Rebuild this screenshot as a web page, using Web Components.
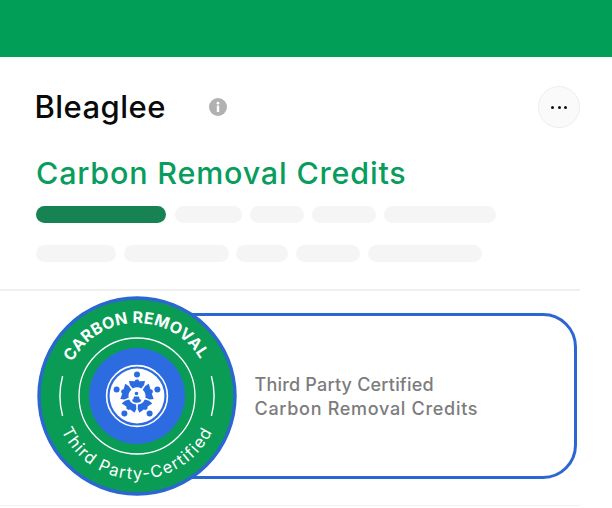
<!DOCTYPE html>
<html>
<head>
<meta charset="utf-8">
<title>Bleaglee</title>
<style>
  html, body { margin: 0; padding: 0; background: #fff; }
  body { font-family: "Inter", "Liberation Sans", sans-serif; overflow: hidden; }
</style>
</head>
<body>
<credit-page>
  <info-head name="Bleaglee"></info-head>
  <h-title slot="title">Carbon Removal Credits</h-title>
  <pill-row slot="rows" widths="130:dark,67::1,54,64,112"></pill-row>
  <pill-row slot="rows" widths="80,105,52::-1,64,114"></pill-row>
  <cert-card slot="card">
    <carbon-badge slot="badge"></carbon-badge>
    <span class="a" slot="one">Third Party Certified</span>
    <span class="b" slot="two">Carbon Removal Credits</span>
  </cert-card>
</credit-page>

<script>
class CreditPage extends HTMLElement {
  constructor() {
    super();
    this.attachShadow({ mode: "open" }).innerHTML = `
      <style>
        :host { display: block; width: 612px; height: 508px; background: #fff; }
        .bar { height: 57px; background: #019e58; }
        .top { width: 580px; height: 234px; box-sizing: border-box; padding: 29px 0 0 36px; border-bottom: 2px solid #f0f0f0; }
        .rows { display: flex; flex-direction: column; gap: 22.5px; margin-top: 13px; }
        .low { width: 580px; height: 215px; box-sizing: border-box; padding: 5px 0 0 36.5px; border-bottom: 1px solid #f2f2f2; }
      </style>
      <div class="bar"></div>
      <div class="top">
        <slot></slot>
        <slot name="title"></slot>
        <div class="rows"><slot name="rows"></slot></div>
      </div>
      <div class="low"><slot name="card"></slot></div>`;
  }
}
customElements.define("credit-page", CreditPage);

class InfoHead extends HTMLElement {
  constructor() {
    super();
    this.attachShadow({ mode: "open" }).innerHTML = `
      <style>
        :host { display: flex; align-items: center; height: 42px; }
        .name { font: 500 31px/42px "Inter", sans-serif; color: #0a0a0a; width: 174px; margin-left: -1.5px; letter-spacing: .45px; }
        svg { display: block; }
        .more { margin-left: auto; width: 42px; height: 42px; box-sizing: border-box; border-radius: 50%; background: #fafafa; border: 1px solid #eeeeee; display: flex; align-items: center; justify-content: center; gap: 3.6px; }
        .more i { width: 3px; height: 3px; border-radius: 50%; background: #111; }
      </style>
      <span class="name"></span>
      <svg width="18" height="18" viewBox="0 0 18 18">
        <circle cx="9" cy="9" r="9" fill="#b1b1b1"/>
        <circle cx="9" cy="5.2" r="1.4" fill="#fff"/>
        <rect x="7.8" y="7.6" width="2.4" height="6.4" rx=".5" fill="#fff"/>
      </svg>
      <div class="more"><i></i><i></i><i></i></div>`;
    this.shadowRoot.querySelector(".name").textContent = this.getAttribute("name");
  }
}
customElements.define("info-head", InfoHead);

class HTitle extends HTMLElement {
  constructor() {
    super();
    this.attachShadow({ mode: "open" }).innerHTML = `
      <style>
        :host { display: block; margin-top: 25px; font: 500 30.5px/40px "Inter", sans-serif; color: #089d5c; letter-spacing: .8px; }
      </style>
      <slot></slot>`;
  }
}
customElements.define("h-title", HTitle);

class PillRow extends HTMLElement {
  constructor() {
    super();
    this.attachShadow({ mode: "open" }).innerHTML = `
      <style>
        :host { display: flex; gap: 8px; }
        b { display: block; height: 16.5px; border-radius: 9px; background: #f5f5f5; }
        b.dark { background: #178353; }
      </style>`;
    for (const w of this.getAttribute("widths").split(",")) {
      const pill = document.createElement("b");
      const [px, kind, nudge] = w.split(":");
      pill.style.width = px + "px";
      if (kind) pill.className = kind;
      if (nudge) pill.style.marginLeft = nudge + "px";
      this.shadowRoot.appendChild(pill);
    }
  }
}
customElements.define("pill-row", PillRow);

class CertCard extends HTMLElement {
  constructor() {
    super();
    this.attachShadow({ mode: "open" }).innerHTML = `
      <style>
        :host { display: flex; align-items: center; width: 540px; height: 200px; }
        .badge { position: relative; z-index: 1; flex: none; display: block; width: 200px; height: 200px; }
        .box {
          flex: none; width: 427px; height: 166px; box-sizing: border-box; margin-left: -86.5px;
          display: flex; flex-direction: column; justify-content: center; padding: 2px 0 0 101.5px;
          border: 3px solid #2c66d2; border-radius: 34px;
          font: 500 18px/24px "Inter", sans-serif; color: #7c7c7c;
        }
        ::slotted(.a) { letter-spacing: .2px; }
        ::slotted(.b) { letter-spacing: .7px; }
      </style>
      <div class="badge"><slot name="badge"></slot></div>
      <div class="box"><slot name="one"></slot><slot name="two"></slot></div>`;
  }
}
customElements.define("cert-card", CertCard);

// one lobe of the ring in the logo, pointing at angle deg
function lobe(deg) {
  const p = (a, r) => {
    const t = (deg + a - 90) * Math.PI / 180;
    return (100 + r * Math.cos(t)).toFixed(1) + " " + (100 + r * Math.sin(t)).toFixed(1);
  };
  return `<path d="M ${p(-30, 8.5)} L ${p(-33, 13)} L ${p(-28, 17)} L ${p(-9, 15)} L ${p(-4, 16.5)} L ${p(4, 16.5)} L ${p(9, 15)} L ${p(28, 17)} L ${p(33, 13)} L ${p(30, 8.5)} A 8.5 8.5 0 0 0 ${p(-30, 8.5)} Z"/>`;
}

class CarbonBadge extends HTMLElement {
  constructor() {
    super();
    const dots = [0, 72, 144, 216, 288].map(d => {
      const t = (d - 90) * Math.PI / 180;
      return `<circle cx="${(100 + 21.5 * Math.cos(t)).toFixed(1)}" cy="${(100 + 21.5 * Math.sin(t)).toFixed(1)}" r="3"/>`;
    }).join("");
    const lobes = [0, 72, 144, 216, 288].map(lobe).join("");
    this.attachShadow({ mode: "open" }).innerHTML = `
      <style>
        :host { display: block; width: 200px; height: 200px; }
        svg { display: block; }
        text { fill: #fff; font-family: "Inter", sans-serif; }
      </style>
      <svg width="200" height="200" viewBox="0 0 200 200">
        <defs>
          <path id="top" d="M 28.1 112.7 A 73 73 0 1 1 171.9 112.7"/>
          <path id="bot" d="M 18.3 85.6 A 83 83 0 1 0 181.7 85.6"/>
        </defs>
        <circle cx="100" cy="100" r="98" fill="#0a9c55" stroke="#2b66d1" stroke-width="3.4"/>
        <circle cx="100" cy="100" r="58" fill="none" stroke="#fff" stroke-width="1.3"/>
        <circle cx="100" cy="100" r="48" fill="#2d6ce0"/>
        <path d="M 25.6 80 A 77 77 0 0 0 25.6 120 M 174.4 80 A 77 77 0 0 1 174.4 120" fill="none" stroke="#fff" stroke-width="1.4"/>
        <text font-size="16" font-weight="700" letter-spacing=".3">
          <textPath href="#top" startOffset="49.4%" text-anchor="middle">CARBON REMOVAL</textPath>
        </text>
        <text font-size="16.5" letter-spacing="1.35">
          <textPath href="#bot" startOffset="50%" text-anchor="middle">Third Party-Certified</textPath>
        </text>
        <circle cx="100" cy="100" r="30.4" fill="none" stroke="#fff" stroke-width="1.6"/>
        <circle cx="100" cy="100" r="27.4" fill="#fff"/>
        <g fill="#2c6bdf">
          ${dots}
          ${lobes}
          <circle cx="99.5" cy="97.5" r="1.8"/>
          <path d="M 97 100.5 h 5 l .8 3 h 1.5 a 4.6 3.2 0 0 1 -9.2 0 h 1.1 z"/>
        </g>
      </svg>`;
  }
}
customElements.define("carbon-badge", CarbonBadge);
</script>
</body>
</html>
